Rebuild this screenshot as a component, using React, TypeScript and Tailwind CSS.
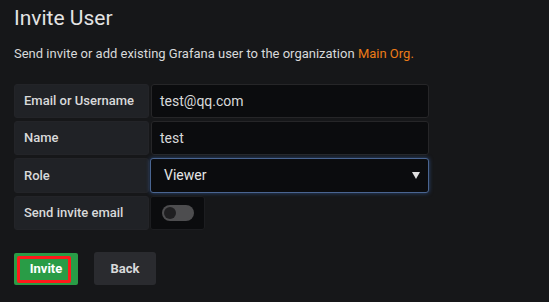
export default function App() {
  return (
    <div className="w-[549px] h-[302px] bg-[#161719] px-[14px] font-['Roboto',sans-serif] text-[#d8d9da] overflow-hidden">
      <h1 className="pt-[5px] text-[21px] leading-[26px] text-[#e3e3e3]">Invite User</h1>

      <p className="mt-[15px] text-[13px] leading-[16px]">
        Send invite or add existing Grafana user to the organization{' '}
        <span className="text-[#eb7b18]">Main Org.</span>
      </p>

      {/* Form */}
      <div className="mt-[22px] flex flex-col gap-[3px]">
        <div className="flex gap-[2px] h-[34px]">
          <div className="w-[135px] flex items-center px-[9px] bg-[#202226] border border-[#232428] rounded-[3px] text-[13px] font-medium">
            Email or Username
          </div>
          <div className="w-[278px] flex items-center px-[8px] bg-[#0b0c0e] border border-[#262628] rounded-[3px] text-[14px]">
            test@qq.com
          </div>
        </div>

        <div className="flex gap-[2px] h-[34px]">
          <div className="w-[135px] flex items-center px-[9px] bg-[#202226] border border-[#232428] rounded-[3px] text-[13px] font-medium">
            Name
          </div>
          <div className="w-[278px] flex items-center px-[8px] bg-[#0b0c0e] border border-[#262628] rounded-[3px] text-[14px]">
            test
          </div>
        </div>

        <div className="flex gap-[2px] h-[35px]">
          <div className="w-[135px] flex items-center px-[9px] bg-[#202226] border border-[#232428] rounded-[3px] text-[13px] font-medium">
            Role
          </div>
          <div className="w-[279px] -ml-[1px] flex items-center justify-between pl-[13px] pr-[8px] bg-[#0b0c0e] border border-[#4a6591] rounded-[3px] shadow-[0_0_4px_#2d4a78] text-[14px] text-[#e6e6e6]">
            Viewer
            <svg width="8" height="7" viewBox="0 0 8 7">
              <path d="M0 0h8L4 7z" fill="#e0e0e0" />
            </svg>
          </div>
        </div>

        <div className="flex gap-[1px] h-[34px]">
          <div className="w-[135px] flex items-center px-[9px] bg-[#202226] border border-[#232428] rounded-[3px] text-[13px] font-medium">
            Send invite email
          </div>
          <div className="w-[55px] flex items-center justify-center bg-[#0b0c0e] border border-[#1c1d20] rounded-[3px]">
            <div className="w-[32px] h-[16px] rounded-full bg-[#4d4d4f] flex items-center pl-[2px]">
              <div className="w-[12px] h-[12px] rounded-full bg-[#1f1f21]" />
            </div>
          </div>
        </div>
      </div>

      {/* Buttons */}
      <div className="mt-[22px] flex items-start gap-[16px]">
        <button className="relative w-[64px] h-[32px] mt-[1px] bg-[#299c46] rounded-[2px] text-[13px] font-bold text-white">
          <span className="absolute left-[3px] top-[3px] w-[54px] h-[27px] border-[3px] border-[#ff1a1a] rounded-[2px]" />
          Invite
        </button>
        <button className="w-[62px] h-[33px] bg-[#2a2b2f] rounded-[3px] text-[13px] font-bold text-[#d8d9da]">
          Back
        </button>
      </div>
    </div>
  );
}
